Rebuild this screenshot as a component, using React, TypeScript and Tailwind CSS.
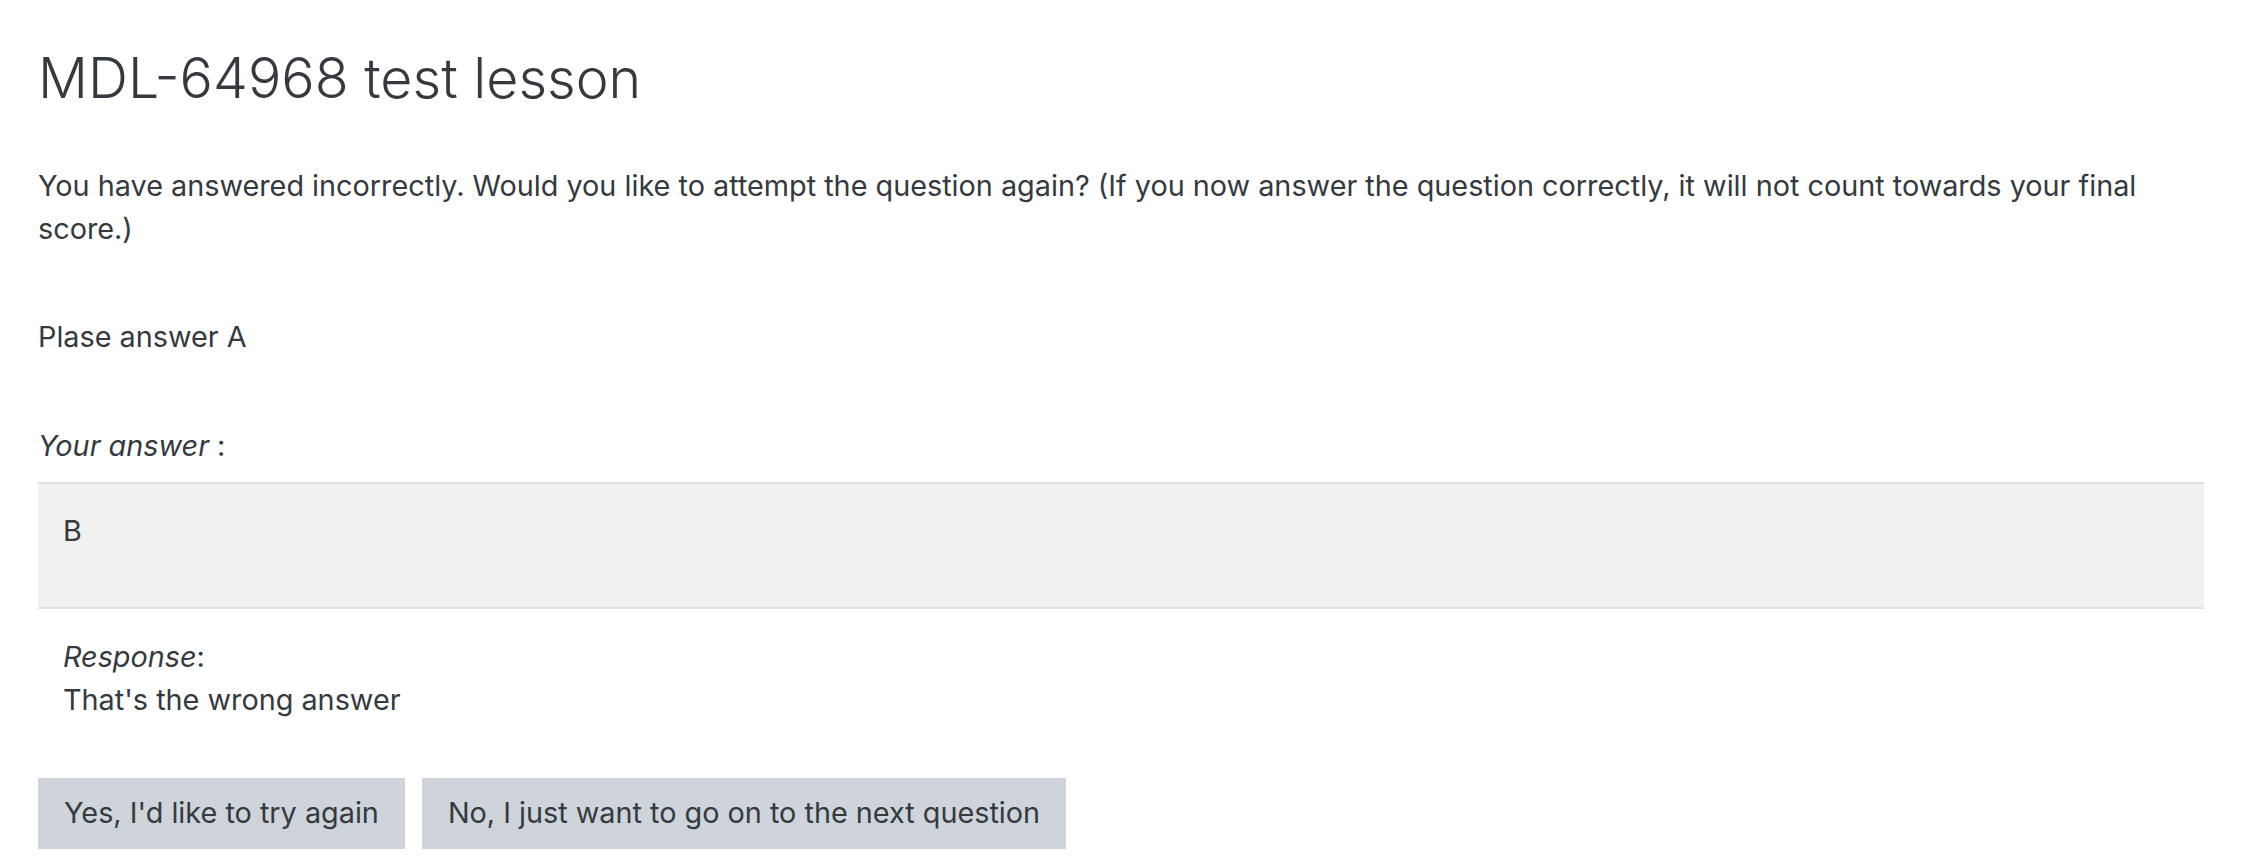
export default function App() {
  return (
    <div className="min-h-screen bg-white px-[38px] pt-[44px] text-[#343a40] text-[28.8px] leading-[1.485] [font-family:Inter,'Liberation_Sans',sans-serif]">
      <h2 className="text-[55.5px] font-light leading-[1.23]">MDL-64968 test lesson</h2>

      <p className="mt-[53px]">
        You have answered incorrectly. Would you like to attempt the question again? (If you now answer the
        question correctly, it will not count towards your final score.)
      </p>

      <p className="mt-[65px]">Plase answer A</p>

      <p className="mt-[66px]">
        <em>Your answer</em> :
      </p>

      <div className="mt-[15px] border-y-2 border-[#dee2e6] bg-[#f1f1f1] px-[25px] pt-[26px] pb-[54px]">
        <p>B</p>
      </div>

      <div className="px-[25px] pt-[27px]">
        <em>Response</em>:
        <p>That's the wrong answer</p>
      </div>

      <div className="mt-[56px] flex gap-[17px]">
        <button className="h-[71px] bg-[#ced4da] px-[26px]">Yes, I'd like to try again</button>
        <button className="h-[71px] bg-[#ced4da] px-[26px]">No, I just want to go on to the next question</button>
      </div>
    </div>
  );
}
